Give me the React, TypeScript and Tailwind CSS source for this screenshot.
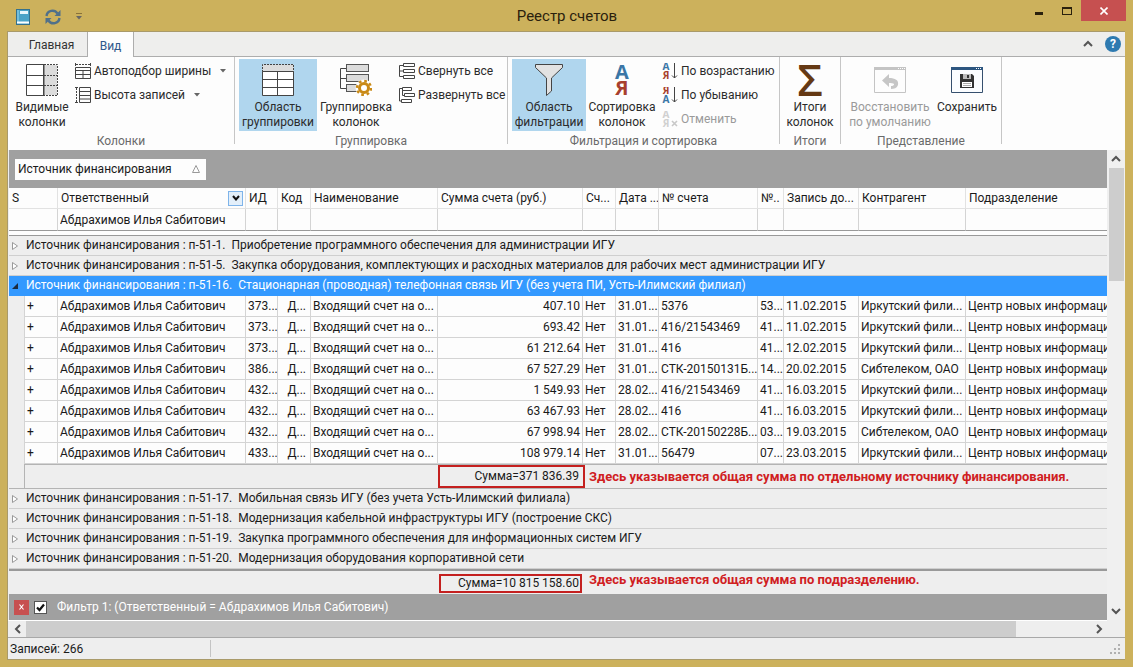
import React, { useState } from 'react';

interface Invoice {
  id: string;
  sum: string;
  date: string;
  number: string;
  doc: string;
  created: string;
  contractor: string;
}

interface Source {
  code: string;
  title: string;
}

const INVOICES: Invoice[] = [
  { id: '373...', sum: '407.10', date: '31.01...', number: '5376', doc: '53...', created: '11.02.2015', contractor: 'Иркутский фили...' },
  { id: '373...', sum: '693.42', date: '31.01...', number: '416/21543469', doc: '41...', created: '11.02.2015', contractor: 'Иркутский фили...' },
  { id: '373...', sum: '61 212.64', date: '31.01...', number: '416', doc: '41...', created: '12.02.2015', contractor: 'Иркутский фили...' },
  { id: '386...', sum: '67 527.29', date: '31.01...', number: 'СТК-20150131Б...', doc: '14...', created: '20.02.2015', contractor: 'Сибтелеком, ОАО' },
  { id: '432...', sum: '1 549.93', date: '28.02...', number: '416/21543469', doc: '41...', created: '16.03.2015', contractor: 'Иркутский фили...' },
  { id: '432...', sum: '63 467.93', date: '28.02...', number: '416', doc: '41...', created: '16.03.2015', contractor: 'Иркутский фили...' },
  { id: '432...', sum: '67 998.94', date: '28.02...', number: 'СТК-20150228Б...', doc: '03...', created: '19.03.2015', contractor: 'Сибтелеком, ОАО' },
  { id: '433...', sum: '108 979.14', date: '31.01...', number: '56479', doc: '07...', created: '23.03.2015', contractor: 'Иркутский фили...' },
];

const SOURCES: Source[] = [
  { code: 'п-51-1', title: 'Приобретение программного обеспечения для администрации ИГУ' },
  { code: 'п-51-5', title: 'Закупка оборудования, комплектующих и расходных материалов для рабочих мест администрации ИГУ' },
  { code: 'п-51-16', title: 'Стационарная (проводная) телефонная связь ИГУ (без учета ПИ, Усть-Илимский филиал)' },
  { code: 'п-51-17', title: 'Мобильная связь ИГУ (без учета Усть-Илимский филиала)' },
  { code: 'п-51-18', title: 'Модернизация кабельной инфраструктуры ИГУ (построение СКС)' },
  { code: 'п-51-19', title: 'Закупка программного обеспечения для информационных систем ИГУ' },
  { code: 'п-51-20', title: 'Модернизация оборудования корпоративной сети' },
];

const COLUMNS = ['Ответственный', 'ИД', 'Код', 'Наименование', 'Сумма счета (руб.)', 'Сч...', 'Дата ...', '№ счета', '№..', 'Запись до...', 'Контрагент', 'Подразделение'];

/* ---------- Icons ---------- */

const VisibleColumnsIcon = () => (
  <svg width="32" height="32" viewBox="0 0 32 32" fill="none" aria-hidden="true">
    <rect x="18" y="1" width="13" height="30" fill="#dcdcdc" />
    <path d="M.5.5H18V31.5H.5ZM.5 11.5H18M.5 21.5H18" stroke="#444" fill="#fff" />
    <path d="M18 .5H31.5V31.5H18M18 11.5H31M18 21.5H31" stroke="#444" strokeDasharray="2 1" />
    <path d="M17.5 0V32" stroke="#444" />
  </svg>
);

const FitWidthIcon = () => (
  <svg width="16" height="16" viewBox="0 0 16 16" fill="none" stroke="#444" aria-hidden="true">
    <path d="M1 1.5H15" strokeDasharray="2 1" />
    <path d="M.5 0V3M15.5 0V3" />
    <path d="M.5 4.5H15.5V15.5H.5ZM.5 7.5H15.5M.5 11.5H15.5M8 7.5V15.5" />
  </svg>
);

const RowHeightIcon = () => (
  <svg width="16" height="16" viewBox="0 0 16 16" fill="none" stroke="#444" aria-hidden="true">
    <path d="M1.5 1V15" strokeDasharray="2 1" />
    <path d="M0 .5H3M0 15.5H3" />
    <path d="M4.5 .5H15.5V15.5H4.5ZM4.5 4.5H15.5M4.5 8.5H15.5M4.5 12H15.5" />
  </svg>
);

const GroupAreaIcon = () => (
  <svg width="32" height="32" viewBox="0 0 32 32" fill="none" stroke="#444" aria-hidden="true">
    <rect x=".5" y=".5" width="31" height="8" fill="#dcdcdc" stroke="none" />
    <path d="M.5 8V.5H31.5V8" strokeDasharray="2 1" />
    <path d="M.5 7.5H31.5V31.5H.5Z" fill="#fff" />
    <path d="M.5 15.5H31.5M.5 23.5H31.5M15.5 8V31.5" />
  </svg>
);

const GroupColumnsIcon = () => (
  <svg width="32" height="32" viewBox="0 0 32 32" fill="none" aria-hidden="true">
    <path d="M6 4.5H.5V24.5H6M.5 14.5H6" stroke="#444" />
    <g fill="#dcdcdc" stroke="#555">
      <rect x="6.5" y=".5" width="22" height="7" />
      <rect x="6.5" y="10.5" width="22" height="7" />
      <rect x="6.5" y="20.5" width="14" height="7" />
    </g>
    <circle cx="24" cy="24" r="8.5" fill="#fff" />
    <circle cx="24" cy="24" r="4.5" stroke="#c98a17" strokeWidth="3" />
    <circle cx="24" cy="24" r="7" stroke="#c98a17" strokeWidth="2.4" strokeDasharray="2.7 2.8" />
  </svg>
);

const CollapseAllIcon = () => (
  <svg width="16" height="16" viewBox="0 0 16 16" fill="#fff" stroke="#444" aria-hidden="true">
    <path d="M4 2.5H.5V13.5H4M.5 8H4" fill="none" />
    <path d="M4.5 .5H15.5V3.5H4.5ZM4.5 6.5H15.5V9.5H4.5ZM4.5 12.5H15.5V15.5H4.5Z" />
  </svg>
);

const ExpandAllIcon = () => (
  <svg width="16" height="16" viewBox="0 0 16 16" fill="#fff" stroke="#444" aria-hidden="true">
    <path d="M3 1.5H.5V14H2M3.5 3V8.5H5" fill="none" />
    <path d="M3.5 .5H12.5V3.5H3.5ZM5.5 6.5H15.5V9.5H5.5ZM2.5 12.5H12.5V15.5H2.5Z" />
  </svg>
);

const FunnelIcon = () => (
  <svg width="32" height="32" viewBox="0 0 32 32" aria-hidden="true">
    <path d="M2.5.5H29.5V3.5L18.5 14V27L13.5 31.5V14L2.5 3.5Z" fill="#e2e2e2" stroke="#444" />
  </svg>
);

const letterClass = 'font-["Open_Sans","Noto_Sans",sans-serif] font-bold';

const SortIcon = () => (
  <svg width="32" height="32" viewBox="0 0 32 32" textAnchor="middle" className={letterClass} aria-hidden="true">
    <text x="16" y="15" fontSize="20" fill="#3b76a6">А</text>
    <text x="16" y="31" fontSize="20" fill="#a83f2d">Я</text>
  </svg>
);

const SmallSortIcon: React.FC<{ top: string; bottom: string; mode: 'asc' | 'desc' | 'none' }> = ({ top, bottom, mode }) => {
  const blue = mode === 'none' ? '#d0d0d0' : '#3b76a6';
  const red = mode === 'none' ? '#d0d0d0' : '#a83f2d';
  return (
    <svg width="16" height="16" viewBox="0 0 16 16" textAnchor="middle" className={letterClass} aria-hidden="true">
      <text x="4" y="7" fontSize="10" fill={mode === 'desc' ? red : blue}>{top}</text>
      <text x="4" y="16" fontSize="10" fill={mode === 'desc' ? blue : red}>{bottom}</text>
      {mode === 'none'
        ? <path d="M10 10L15 15M15 10L10 15" stroke="#c8c8c8" strokeWidth="1.6" />
        : <path d="M12.5 0V15M10 12.5L12.5 15L15 12.5" stroke="#444" fill="none" />}
    </svg>
  );
};

const SigmaIcon = () => (
  <svg width="32" height="32" viewBox="0 0 32 32" textAnchor="middle" className={letterClass} aria-hidden="true">
    <text x="16" y="32" fontSize="44" fill="#653914" fontWeight="600">Σ</text>
  </svg>
);

const RestoreIcon = () => (
  <svg width="32" height="32" viewBox="0 0 32 32" fill="none" aria-hidden="true">
    <path d="M.5 3.5H31.5V28.5H.5Z" stroke="#c4c4c4" />
    <path d="M0 4.5H32" stroke="#c4c4c4" strokeWidth="3" />
    <path d="M24 4.5H31" stroke="#fff" strokeDasharray="1 1" />
    <path d="M8 16.5L15 10V14C21 14 25 16 24 21C23 24 20 25 17 25V22C21 22 22 18.5 15 19V23Z" fill="#c6c6c6" />
  </svg>
);

const SaveIcon = () => (
  <svg width="32" height="32" viewBox="0 0 32 32" fill="none" aria-hidden="true">
    <path d="M.5 3.5H31.5V28.5H.5Z" stroke="#36506e" fill="#fbfdff" />
    <path d="M0 4.5H32" stroke="#2d5680" strokeWidth="3" />
    <path d="M25 4.5H31" stroke="#fff" strokeDasharray="1 1" />
    <path d="M9 10H21L23 12V24H9Z" fill="#333" />
    <path d="M12 10H20V15H12Z" fill="#bbb" />
    <path d="M16 11H18V14H16Z" fill="#333" />
    <path d="M11 18H21V23H11Z" fill="#fff" />
    <path d="M12 19.5H20M12 21.5H20" stroke="#aaa" />
  </svg>
);

const BookIcon = () => (
  <svg width="14" height="16" viewBox="0 0 14 16" aria-hidden="true">
    <rect x=".5" y=".5" width="13" height="15" fill="#4aa3c7" stroke="#35718c" />
    <path d="M2 1V13" stroke="#9bd9ee" />
    <rect x="4" y="2" width="8" height="3" fill="#e8f7fc" />
    <path d="M1 13.5H13" stroke="#fff" strokeWidth="2" />
  </svg>
);

const RefreshIcon = () => (
  <svg width="18" height="16" viewBox="0 0 18 16" fill="none" stroke="#50708a" strokeWidth="2.4" aria-hidden="true">
    <path d="M2.5 7A6 6 0 0 1 13.5 4.5" />
    <path d="M15.5 9A6 6 0 0 1 4.5 11.5" />
    <path d="M16.5 1V7H10.5Z" fill="#50708a" stroke="none" />
    <path d="M1.5 15V9H7.5Z" fill="#50708a" stroke="none" />
  </svg>
);

const Chevron: React.FC<{ turn?: string }> = ({ turn = '' }) => (
  <svg width="10" height="8" viewBox="0 0 10 8" className={turn} fill="none" stroke="#555" strokeWidth="2" aria-hidden="true">
    <path d="M1 6L5 2L9 6" />
  </svg>
);

const CaretDown = () => (
  <svg width="6" height="4" viewBox="0 0 6 4" aria-hidden="true"><path d="M0 0H6L3 3.5Z" fill="#666" /></svg>
);

/* ---------- Ribbon ---------- */

const BigButton: React.FC<{ icon: React.ReactNode; lines: string[]; active?: boolean; disabled?: boolean; width: string }> = ({ icon, lines, active, disabled, width }) => (
  <button
    disabled={disabled}
    aria-pressed={active}
    className={`flex h-[72px] shrink-0 flex-col items-center pt-[5px] leading-[15px] whitespace-nowrap ${width} ${active ? 'bg-[#b0d6ee]' : ''} ${disabled ? 'text-[#9a9a9a]' : 'text-[#2b2b2b]'}`}
  >
    {icon}
    <span className="mt-1">{lines[0]}</span>
    {lines[1] && <span>{lines[1]}</span>}
  </button>
);

const SmallButton: React.FC<{ icon: React.ReactNode; label: string; caret?: boolean; disabled?: boolean }> = ({ icon, label, caret, disabled }) => (
  <button disabled={disabled} className={`flex h-6 items-center gap-[3px] whitespace-nowrap ${disabled ? 'text-[#9a9a9a]' : 'text-[#2b2b2b]'}`}>
    {icon}
    <span>{label}</span>
    {caret && <span className="ml-1.5"><CaretDown /></span>}
  </button>
);

const RibbonGroup: React.FC<{ label: string; width: string; children: React.ReactNode }> = ({ label, width, children }) => (
  <section aria-label={label} className={`flex h-[87px] shrink-0 flex-col border-r border-[#c6c6c6] pt-0.5 ${width}`}>
    <div className="flex px-1">{children}</div>
    <div className="text-center leading-5 text-[#6a6a6a]">{label}</div>
  </section>
);

const Ribbon = () => (
  <div className="flex h-[93px] overflow-hidden bg-[#fdfdfd]">
    <RibbonGroup label="Колонки" width="w-[227px]">
      <BigButton icon={<VisibleColumnsIcon />} lines={['Видимые', 'колонки']} width="w-[60px]" />
      <div className="ml-[3px] flex flex-col">
        <SmallButton icon={<FitWidthIcon />} label="Автоподбор ширины" caret />
        <SmallButton icon={<RowHeightIcon />} label="Высота записей" caret />
      </div>
    </RibbonGroup>
    <RibbonGroup label="Группировка" width="w-[273px]">
      <BigButton icon={<GroupAreaIcon />} lines={['Область', 'группировки']} active width="w-[78px]" />
      <BigButton icon={<GroupColumnsIcon />} lines={['Группировка', 'колонок']} width="w-[78px]" />
      <div className="ml-1 flex flex-col">
        <SmallButton icon={<CollapseAllIcon />} label="Свернуть все" />
        <SmallButton icon={<ExpandAllIcon />} label="Развернуть все" />
      </div>
    </RibbonGroup>
    <RibbonGroup label="Фильтрация и сортировка" width="w-[272px]">
      <BigButton icon={<FunnelIcon />} lines={['Область', 'фильтрации']} active width="w-[74px]" />
      <BigButton icon={<SortIcon />} lines={['Сортировка', 'колонок']} width="w-[72px]" />
      <div className="ml-1 flex flex-col">
        <SmallButton icon={<SmallSortIcon top="А" bottom="Я" mode="asc" />} label="По возрастанию" />
        <SmallButton icon={<SmallSortIcon top="Я" bottom="А" mode="desc" />} label="По убыванию" />
        <SmallButton icon={<SmallSortIcon top="А" bottom="Я" mode="none" />} label="Отменить" disabled />
      </div>
    </RibbonGroup>
    <RibbonGroup label="Итоги" width="w-[61px]">
      <BigButton icon={<SigmaIcon />} lines={['Итоги', 'колонок']} width="w-[52px]" />
    </RibbonGroup>
    <RibbonGroup label="Представление" width="w-[161px]">
      <BigButton icon={<RestoreIcon />} lines={['Восстановить', 'по умолчанию']} disabled width="w-[90px]" />
      <BigButton icon={<SaveIcon />} lines={['Сохранить']} width="w-[64px]" />
    </RibbonGroup>
  </div>
);

const TitleBar = () => (
  <header className="grid h-[31px] grid-cols-[1fr_auto_1fr]">
    <div className="flex items-center gap-3.5 pt-0.5 pl-2">
      <button aria-label="Реестр"><BookIcon /></button>
      <button aria-label="Обновить"><RefreshIcon /></button>
      <button aria-label="Настройка панели" className="flex flex-col items-center gap-0.5">
        <span className="h-px w-1.5 bg-[#8a7238]" />
        <CaretDown />
      </button>
    </div>
    <h1 className="self-center text-[15px] leading-5 text-[#2a210d]">Реестр счетов</h1>
    <div className="flex items-start justify-end">
      <button aria-label="Свернуть" className="flex h-[21px] w-7 items-center justify-center pt-1.5">
        <span className="h-[3px] w-2 bg-[#2a210d]" />
      </button>
      <button aria-label="Развернуть" className="flex h-[21px] w-7 items-center justify-center">
        <span className="h-2 w-2.5 border border-t-2 border-[#2a210d]" />
      </button>
      <button aria-label="Закрыть" className="flex h-[21px] w-[45px] items-center justify-center bg-[#c65050]">
        <svg width="8" height="8" viewBox="0 0 8 8" stroke="#fff" strokeWidth="1.6"><path d="M.5.5L7.5 7.5M7.5.5L.5 7.5" /></svg>
      </button>
    </div>
  </header>
);

const TabBar = () => (
  <nav className="flex h-[26px] border-t border-[#a99a6a] bg-[#eeeeed]">
    <button className="w-[79px] border-b border-[#adadad] pt-0.5 pl-2 text-[#333]">Главная</button>
    <button aria-current="page" className="w-[47px] border-x border-[#adadad] bg-[#fdfdfd] pt-0.5 text-[#2f5a8c]">Вид</button>
    <div className="flex flex-1 items-center justify-end gap-3 border-b border-[#adadad] pr-1">
      <button aria-label="Свернуть ленту"><Chevron /></button>
      <button aria-label="Справка" className="flex h-4 w-4 items-center justify-center rounded-full bg-[#2e7ab0] text-xs font-bold text-white">?</button>
    </div>
  </nav>
);

/* ---------- Grid ---------- */

const cell = 'h-[21px] overflow-hidden border-b border-l border-[#d4d4d4] p-0 pl-0.5';

const InvoiceRow: React.FC<{ invoice: Invoice }> = ({ invoice }) => (
  <tr className="bg-[#fdfdfd]">
    <td className="bg-[#eeeeee] p-0" />
    <td className={cell}><button aria-label="Подробнее">+</button></td>
    <td className={cell}>Абдрахимов Илья Сабитович</td>
    <td className={cell}>{invoice.id}</td>
    <td className={`${cell} pr-1 text-right`}>Д...</td>
    <td className={cell}>Входящий счет на о...</td>
    <td className={`${cell} pr-0.5 text-right`}>{invoice.sum}</td>
    <td className={cell}>Нет</td>
    <td className={cell}>{invoice.date}</td>
    <td className={cell}>{invoice.number}</td>
    <td className={cell}>{invoice.doc}</td>
    <td className={cell}>{invoice.created}</td>
    <td className={cell}>{invoice.contractor}</td>
    <td className={cell}>Центр новых информаци</td>
  </tr>
);

const SourceRow: React.FC<{ source: Source; open: boolean; onToggle: () => void }> = ({ source, open, onToggle }) => (
  <tr className={open ? 'bg-[#3399ff] text-white' : 'bg-[#eeeeee]'}>
    <td colSpan={14} className={`h-5 border-b p-0 ${open ? 'border-[#3399ff]' : 'border-[#cfcfcf]'}`}>
      <button onClick={onToggle} aria-expanded={open} className="flex items-center gap-2 pl-[3px] leading-[19px] whitespace-pre">
        <svg width="6" height="8" viewBox="0 0 6 8" aria-hidden="true">
          {open ? <path d="M6 1V7H0Z" fill="#1c2c40" /> : <path d="M.5.5L5.5 4L.5 7.5Z" fill="#fff" stroke="#999" />}
        </svg>
        <span>{`Источник финансирования : ${source.code}.  ${source.title}`}</span>
      </button>
    </td>
  </tr>
);

const noteClass = 'p-0 pl-[7px] text-[13px] font-bold text-[#d0201f]';

const App: React.FC = () => {
  const [openCode, setOpenCode] = useState('п-51-16');
  const [filterOn, setFilterOn] = useState(true);
  const [person, setPerson] = useState('Абдрахимов Илья Сабитович');

  return (
    <div className='flex min-h-screen flex-col bg-[#ccb15c] font-[Roboto,"Noto_Sans",sans-serif] text-xs leading-[18px] text-[#1a1a1a]'>
      <div className="pr-[7px] pl-2"><TitleBar /></div>
      <main className="mr-2 mb-2 ml-[7px] flex flex-1 flex-col border-b border-l border-[#a99a6a] bg-[#eeeeee]">
        <TabBar />
        <Ribbon />

        <div className="flex flex-1">
          <div className="flex min-w-0 flex-1 flex-col bg-[#eeeeee] pl-px">
            <div className="flex h-[38px] items-center bg-[#a0a0a0] pl-1.5">
              <button className="flex h-[21px] w-[191px] items-center justify-between bg-[#fdfdfd] pr-1.5 pl-[3px]">
                <span>Источник финансирования</span>
                <svg width="8" height="8" viewBox="0 0 8 8" fill="none" stroke="#999" aria-hidden="true"><path d="M4 .5L7.5 7.5H.5Z" /></svg>
              </button>
            </div>

            <table className="w-full table-fixed border-separate border-spacing-0 whitespace-nowrap">
              <colgroup>
                <col className="w-[15px]" />
                <col className="w-[33px]" />
                <col className="w-[188px]" />
                <col className="w-[32px]" />
                <col className="w-[33px]" />
                <col className="w-[127px]" />
                <col className="w-[145px]" />
                <col className="w-[33px]" />
                <col className="w-[43px]" />
                <col className="w-[99px]" />
                <col className="w-[26px]" />
                <col className="w-[75px]" />
                <col className="w-[107px]" />
                <col />
              </colgroup>
              <thead className="bg-[#fdfdfd]">
                <tr>
                  <th colSpan={2} className="h-[21px] border-b border-[#e2e2e2] p-0 pl-[3px] text-left font-normal">S</th>
                  {COLUMNS.map(name => (
                    <th key={name} className="overflow-hidden border-b border-l border-[#e2e2e2] p-0 pl-[3px] text-left font-normal">
                      {name === 'Ответственный' ? (
                        <div className="flex items-center justify-between pr-0.5">
                          <span>{name}</span>
                          <button aria-label="Фильтр по ответственному" className="flex h-[15px] w-[15px] items-center justify-center border border-[#7eb4ea] bg-[#e3effa]">
                            <svg width="8" height="6" viewBox="0 0 8 6" fill="none" stroke="#111" strokeWidth="2"><path d="M1 1L4 4.5L7 1" /></svg>
                          </button>
                        </div>
                      ) : name}
                    </th>
                  ))}
                </tr>
                <tr>
                  <td colSpan={2} className="h-[22px] border-b border-[#999] p-0" />
                  {COLUMNS.map(name => (
                    <td key={name} className="border-b border-l border-b-[#999] border-l-[#d4d4d4] p-0 pl-0.5">
                      <input
                        aria-label={`Фильтр: ${name}`}
                        value={name === 'Ответственный' ? person : undefined}
                        onChange={name === 'Ответственный' ? e => setPerson(e.target.value) : undefined}
                        className="block h-5 w-full bg-transparent outline-none"
                      />
                    </td>
                  ))}
                </tr>
                <tr>
                  <td colSpan={14} className="h-[5px] border-b border-[#999] p-0" />
                </tr>
              </thead>
              <tbody>
                {SOURCES.map(source => {
                  const open = source.code === openCode;
                  return (
                    <React.Fragment key={source.code}>
                      <SourceRow source={source} open={open} onToggle={() => setOpenCode(open ? '' : source.code)} />
                      {open && INVOICES.map((invoice, i) => <InvoiceRow key={i} invoice={invoice} />)}
                      {open && (
                        <tr>
                          <td className="h-[25px] border-b border-[#b4b4b4] p-0" />
                          <td colSpan={5} className="border-t border-b border-l border-[#b4b4b4] p-0" />
                          <td className="border-t border-b border-[#b4b4b4] p-0 pl-px">
                            <div className="h-[23px] w-[147px] border-2 border-[#c4201f] pr-1 text-right leading-[19px]">Сумма=371 836.39</div>
                          </td>
                          <td colSpan={7} className={`border-t border-b border-[#b4b4b4] ${noteClass}`}>Здесь указывается общая сумма по отдельному источнику финансирования.</td>
                        </tr>
                      )}
                    </React.Fragment>
                  );
                })}
              </tbody>
              <tfoot>
                <tr>
                  <td colSpan={6} className="h-[25px] border-t-2 border-[#999] p-0" />
                  <td className="border-t-2 border-[#999] p-0 pl-0.5">
                    <div className="mt-0.5 h-[19px] border-2 border-[#c4201f] pr-px text-right leading-[15px]">Сумма=10 815 158.60</div>
                  </td>
                  <td colSpan={7} className={`border-t-2 border-[#999] align-top ${noteClass}`}>Здесь указывается общая сумма по подразделению.</td>
                </tr>
              </tfoot>
            </table>

            <div className="flex h-[26px] items-center bg-[#a0a0a0] pl-[5px] text-white">
              <button aria-label="Удалить фильтр" className="flex h-[15px] w-[15px] items-center justify-center bg-[#c75050]">
                <svg width="5" height="6" viewBox="0 0 5 6" stroke="#fff" strokeWidth="1.2"><path d="M.5.5L4.5 5.5M4.5.5L.5 5.5" /></svg>
              </button>
              <label className="flex items-center gap-2.5 pl-[5px]">
                <span className="grid">
                  <input
                    type="checkbox"
                    checked={filterOn}
                    onChange={e => setFilterOn(e.target.checked)}
                    className="peer col-start-1 row-start-1 h-[13px] w-[13px] appearance-none border border-[#555] bg-white"
                  />
                  <svg width="13" height="13" viewBox="0 0 13 13" fill="none" stroke="#111" strokeWidth="2.2" className="pointer-events-none invisible col-start-1 row-start-1 peer-checked:visible"><path d="M3 6.5L5.5 9L10 3.5" /></svg>
                </span>
                <span>Фильтр 1: (Ответственный = Абдрахимов Илья Сабитович)</span>
              </label>
            </div>
          </div>

          <div className="flex w-[18px] flex-col items-center bg-[#f0f0f0] px-px">
            <button aria-label="Прокрутить вверх" className="flex h-[18px] w-full items-center justify-center"><Chevron /></button>
            <div className="h-[113px] w-[15px] bg-[#cdcdcd]" />
            <div className="flex-1" />
            <button aria-label="Прокрутить вниз" className="flex h-[18px] w-full items-center justify-center"><Chevron turn="rotate-180" /></button>
          </div>
        </div>

        <div className="mr-[18px] flex h-[17px] border-t border-white pl-px">
          <button aria-label="Прокрутить влево" className="flex w-[17px] items-center justify-center"><Chevron turn="-rotate-90" /></button>
          <div className="flex flex-1"><div className="w-[93%] bg-[#cdcdcd]" /></div>
          <button aria-label="Прокрутить вправо" className="flex w-[17px] items-center justify-center"><Chevron turn="rotate-90" /></button>
        </div>

        <footer className="flex h-[22px] border-t border-[#a8a8a8]">
          <div className="my-0.5 w-[203px] border-r border-[#c4c4c4] pl-0.5">Записей: 266</div>
          <div className="flex flex-1 items-end justify-end p-1">
            <svg width="11" height="11" viewBox="0 0 11 11" fill="#b0b0b0" aria-hidden="true">
              <path d="M8 0h2v2H8ZM8 4h2v2H8ZM4 4h2v2H4ZM8 8h2v2H8ZM4 8h2v2H4ZM0 8h2v2H0Z" />
            </svg>
          </div>
        </footer>
      </main>
    </div>
  );
};

export default App;
